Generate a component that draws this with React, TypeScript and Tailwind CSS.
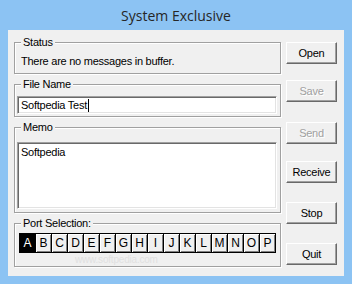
import type { ReactNode } from "react";

const LETTERS = "ABCDEFGHIJKLMNOP".split("");

function Group({
  label,
  className,
  children,
}: {
  label: string;
  className: string;
  children?: ReactNode;
}) {
  return (
    <div
      className={`relative border border-[#a0a0a0] shadow-[inset_1px_1px_0_#fff,1px_1px_0_#fff] ${className}`}
    >
      <span className="absolute left-[6px] top-[-8px] bg-[#f0f0f0] px-[2px] leading-[14px]">
        {label}
      </span>
      {children}
    </div>
  );
}

function Btn({
  label,
  disabled,
  className,
}: {
  label: string;
  disabled?: boolean;
  className: string;
}) {
  return (
    <button
      className={`flex h-[22px] w-[51px] items-center justify-center border border-t-white border-l-white border-r-[#696969] border-b-[#696969] bg-[#f0f0f0] leading-[14px] shadow-[inset_-1px_-1px_0_#a0a0a0] ${
        disabled ? "text-[#a0a0a0] [text-shadow:1px_1px_0_#fff]" : "text-black"
      } ${className}`}
    >
      {label}
    </button>
  );
}

export default function App() {
  return (
    <div className="flex h-[284px] w-[352px] flex-col bg-[#8cc3f3] font-['Liberation_Sans',Arial,sans-serif] text-[11px] tracking-[-0.25px] text-black">
      <div className="flex h-[30px] items-center justify-center pt-px font-['Open_Sans',sans-serif] text-[14px] tracking-normal text-[#262626]">
        System Exclusive
      </div>

      <div className="mx-[8px] flex h-[246px] bg-[#f0f0f0]">
        <div className="ml-[6px] flex w-[267px] flex-col">
          <Group label="Status" className="mt-[12px] h-[32px]">
            <p className="pl-[6px] pt-[11px] leading-[14px]">There are no messages in buffer.</p>
          </Group>

          <Group label="File Name" className="mt-[10px] h-[33px]">
            <div className="ml-[2px] mt-[11px] flex h-[18px] w-[260px] items-center border border-t-[#a0a0a0] border-l-[#a0a0a0] border-r-white border-b-white bg-white pl-[3px] leading-[16px] shadow-[inset_1px_1px_0_#696969,inset_-1px_-1px_0_#e3e3e3]">
              Softpedia Test
              <span className="ml-px inline-block h-[13px] w-px bg-black" />
            </div>
          </Group>

          <Group label="Memo" className="mt-[10px] h-[86px]">
            <div className="ml-[2px] mt-[14px] h-[67px] w-[260px] border border-t-[#a0a0a0] border-l-[#a0a0a0] border-r-white border-b-white bg-white pl-[3px] pt-[2px] leading-[14px] shadow-[inset_1px_1px_0_#696969,inset_-1px_-1px_0_#e3e3e3]">
              Softpedia
            </div>
          </Group>

          <Group label="Port Selection:" className="mt-[10px] h-[44px]">
            <div className="ml-[4px] mt-[9px] flex w-fit gap-px bg-black p-px">
              {LETTERS.map((l, i) => (
                <div
                  key={l}
                  className={`flex h-[18px] w-[15px] items-center justify-center text-[12px] tracking-normal ${
                    i === 0
                      ? "bg-black text-white"
                      : "bg-[#f0f0f0] shadow-[inset_1px_1px_0_#fff,inset_-1px_-1px_0_#808080]"
                  }`}
                >
                  {l}
                </div>
              ))}
            </div>
            <span className="absolute left-[60px] top-[30px] text-[10px] leading-[12px] tracking-[-0.2px] text-[#e0e0e0]">
              www.softpedia.com
            </span>
          </Group>
        </div>

        <div className="ml-[5px] flex w-[51px] flex-col">
          <Btn label="Open" className="mt-[12px]" />
          <Btn label="Save" disabled className="mt-[16px]" />
          <Btn label="Send" disabled className="mt-[20px]" />
          <Btn label="Receive" className="mt-[17px]" />
          <Btn label="Stop" className="mt-[19px]" />
          <Btn label="Quit" className="mt-[19px]" />
        </div>
      </div>
    </div>
  );
}
